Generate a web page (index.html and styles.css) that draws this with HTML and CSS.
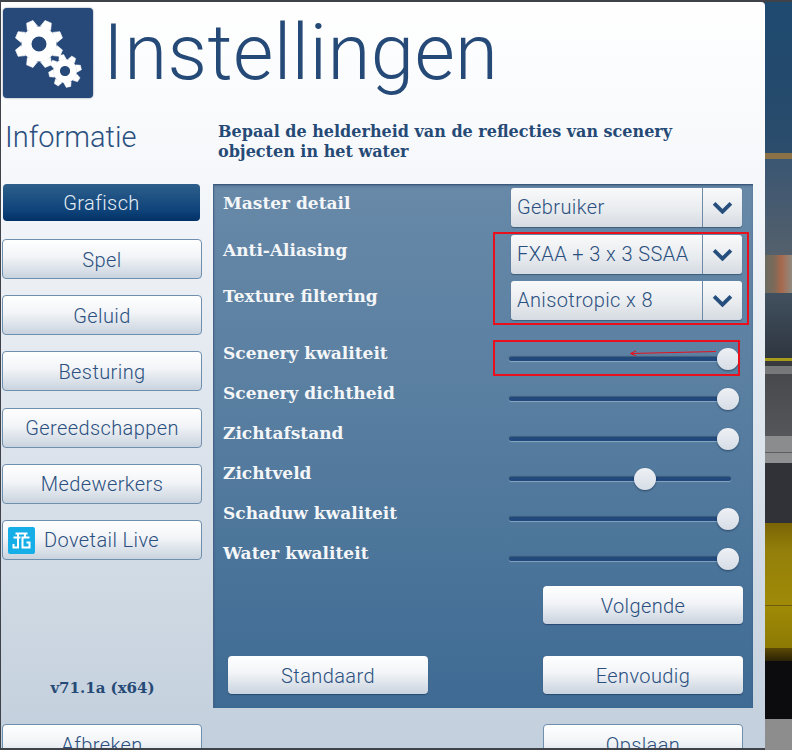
FILE: index.html
```html
<!DOCTYPE html>
<html lang="nl">
<head>
<meta charset="utf-8">
<title>Instellingen</title>
<link rel="stylesheet" href="styles.css">
</head>
<body>
<div class="stage">
  <div class="panel">
    <header class="head">
      <svg class="logo" viewBox="0 0 90 90" aria-hidden="true">
        <defs>
          <g id="gear">
            <g id="teeth">
              <polygon id="t" points="-5.5,-17 -3.4,-24 3.4,-24 5.5,-17" transform="rotate(22.5)"/>
              <polygon points="-5.5,-17 -3.4,-24 3.4,-24 5.5,-17" transform="rotate(67.5)"/>
              <polygon points="-5.5,-17 -3.4,-24 3.4,-24 5.5,-17" transform="rotate(112.5)"/>
              <polygon points="-5.5,-17 -3.4,-24 3.4,-24 5.5,-17" transform="rotate(157.5)"/>
              <polygon points="-5.5,-17 -3.4,-24 3.4,-24 5.5,-17" transform="rotate(202.5)"/>
              <polygon points="-5.5,-17 -3.4,-24 3.4,-24 5.5,-17" transform="rotate(247.5)"/>
              <polygon points="-5.5,-17 -3.4,-24 3.4,-24 5.5,-17" transform="rotate(292.5)"/>
              <polygon points="-5.5,-17 -3.4,-24 3.4,-24 5.5,-17" transform="rotate(337.5)"/>
            </g>
            <circle r="12.5" fill="none" stroke="#fff" stroke-width="10"/>
          </g>
        </defs>
        <use href="#gear" class="gear" transform="translate(36 36)"/>
        <use href="#gear" class="gear" transform="translate(62 63) scale(.68) rotate(10)"/>
      </svg>
      <h1 class="title">Instellingen</h1>
    </header>

    <div class="columns">
      <nav class="side">
        <h2 class="info">Informatie</h2>
        <button class="btn active">Grafisch</button>
        <button class="btn">Spel</button>
        <button class="btn">Geluid</button>
        <button class="btn">Besturing</button>
        <button class="btn">Gereedschappen</button>
        <button class="btn">Medewerkers</button>
        <button class="btn live">
          <svg class="dt" viewBox="0 0 27 27" aria-hidden="true">
            <rect width="27" height="27" rx="2" class="dt-bg"/>
            <path class="dt-mark" d="M7.5 6.5h12M10 6.5v3M17 6.5v3M5.5 10.5h7M10 10.5v10H5.5v-3.5M21.5 10.5h-7v10h7v-5h-3"/>
          </svg>
          Dovetail Live
        </button>
        <p class="version">v71.1a (x64)</p>
        <button class="btn foot">Afbreken</button>
      </nav>

      <main class="main">
        <p class="desc">Bepaal de helderheid van de reflecties van scenery<br>objecten in het water</p>
        <section class="box">
          <div class="row sel-row"><span class="label">Master detail</span><div class="select"><span class="val">Gebruiker</span><span class="chev"><svg viewBox="0 0 20 12"><path d="M2 2l8 8 8-8"/></svg></span></div></div>
          <div class="row sel-row"><span class="label">Anti-Aliasing</span><div class="select"><span class="val">FXAA + 3 x 3 SSAA</span><span class="chev"><svg viewBox="0 0 20 12"><path d="M2 2l8 8 8-8"/></svg></span></div></div>
          <div class="row sel-row"><span class="label">Texture filtering</span><div class="select"><span class="val">Anisotropic x 8</span><span class="chev"><svg viewBox="0 0 20 12"><path d="M2 2l8 8 8-8"/></svg></span></div></div>
          <div class="sliders">
            <div class="row sl-row"><span class="label">Scenery kwaliteit</span><div class="slider"><span class="thumb"></span></div></div>
            <div class="row sl-row"><span class="label">Scenery dichtheid</span><div class="slider"><span class="thumb"></span></div></div>
            <div class="row sl-row"><span class="label">Zichtafstand</span><div class="slider"><span class="thumb"></span></div></div>
            <div class="row sl-row"><span class="label">Zichtveld</span><div class="slider mid"><span class="thumb"></span></div></div>
            <div class="row sl-row"><span class="label">Schaduw kwaliteit</span><div class="slider"><span class="thumb"></span></div></div>
            <div class="row sl-row"><span class="label">Water kwaliteit</span><div class="slider"><span class="thumb"></span></div></div>
          </div>
          <div class="next"><button class="btn wide">Volgende</button></div>
          <div class="actions"><button class="btn wide">Standaard</button><button class="btn wide">Eenvoudig</button></div>
        </section>
        <div class="save"><button class="btn wide foot">Opslaan</button></div>
      </main>
    </div>

    <div class="mark mark-a"></div>
    <div class="mark mark-b"></div>
    <svg class="arrow" viewBox="0 0 90 6" aria-hidden="true"><path d="M87 1.5L2 3.5M7 .8L1.5 3.5 7 6"/></svg>
  </div>

  <div class="scene" aria-hidden="true">
    <i class="b sky"></i><i class="b crane"></i><i class="b haze"></i><i class="b town"></i><i class="b hull"></i><i class="b yline"></i><i class="b gap"></i><i class="b lgrey"></i><i class="b road"></i><i class="b slab"></i><i class="b slab2"></i><i class="b dark"></i><i class="b yellow"></i><i class="b yline2"></i><i class="b yellow2"></i><i class="b gold"></i><i class="b black"></i><i class="b end"></i>
  </div>
</div>
</body>
</html>
```

FILE: styles.css
```css
* { box-sizing: border-box; }
html, body { margin: 0; padding: 0; background: #3a3f47; }
.stage {
  width: 792px;
  height: 750px;
  overflow: hidden;
  display: flex;
  padding: 2px 0 2px 1px;
  background: #3f4249;
}
.panel {
  position: relative;
  width: 764px;
  height: 746px;
  flex: none;
  overflow: hidden;
  background: linear-gradient(180deg, #ffffff 0%, #f6f8fb 22%, #d8e0e9 65%, #c2cfdc 100%);
  border-top-right-radius: 4px;
  color: #264a76;
  font-family: Roboto, sans-serif;
}
.head { display: flex; align-items: flex-start; height: 112px; padding: 6px 0 0 2px; }
.logo {
  width: 90px;
  height: 90px;
  flex: none;
  background: #26497a;
  border-radius: 4px;
  box-shadow: 0 0 2px rgba(30, 50, 80, .6);
}
.gear { fill: #fff; stroke: #fff; stroke-width: .6px; stroke-linejoin: round; }
.title {
  margin: 2px 0 0 10px;
  font-family: Roboto, sans-serif;
  font-weight: 300;
  font-size: 78px;
  line-height: 86px;
  letter-spacing: .4px;
  color: #254a78;
}
.columns { display: flex; }
.side { width: 212px; flex: none; padding-left: 1px; display: flex; flex-direction: column; }
.info {
  margin: 6px 0 30px 3px;
  height: 34px;
  font-family: Roboto, sans-serif;
  font-weight: 300;
  font-size: 29px;
  line-height: 34px;
  color: #2b5080;
}
.btn {
  display: flex;
  align-items: center;
  justify-content: center;
  width: 200px;
  height: 40px;
  margin: 0 0 16.2px;
  padding: 1px 0 0;
  border: 1px solid #6f8fae;
  border-radius: 4px;
  background: linear-gradient(180deg, #ffffff 0%, #f2f4f7 45%, #c9d3de 100%);
  color: #2b5080;
  font-family: Roboto, sans-serif;
  font-weight: 300;
  font-size: 20px;
  letter-spacing: .4px;
}
.active {
  width: 197px;
  height: 37px;
  margin: 0 0 18px 1px;
  padding: 0;
  border: 0;
  background: linear-gradient(180deg, #2e5f8c 0%, #0f447a 70%, #003166 100%);
  color: #e6edf3;
}
.live { justify-content: flex-start; padding-left: 5px; gap: 9px; }
.dt { width: 27px; height: 27px; }
.dt-bg { fill: #16aee6; }
.dt-mark { fill: none; stroke: #fff; stroke-width: 2; }
.version {
  margin: 92px 0 0;
  padding-right: 10px;
  height: 56px;
  text-align: center;
  font-family: "DejaVu Serif", serif;
  font-weight: 700;
  font-size: 15px;
  line-height: 40px;
  color: #264a76;
}
.foot { margin: 0; }
.main { width: 541px; flex: none; }
.desc {
  margin: 8px 0 22px 5px;
  height: 40px;
  font-family: "DejaVu Serif", serif;
  font-weight: 700;
  font-size: 16px;
  line-height: 20px;
  color: #264a76;
}
.box {
  width: 540px;
  height: 524px;
  padding: 3px 10px 0;
  background: linear-gradient(180deg, #6889a8 0%, #557c9f 50%, #3e6a93 100%);
  border-top: 1px solid #3a587c;
  border-left: 1px solid #46648a;
  box-shadow: inset 0 1px 2px rgba(30, 50, 80, .35);
}
.row { display: flex; justify-content: space-between; }
.label {
  margin-left: -1px;
  font-family: "DejaVu Serif", serif;
  font-weight: 700;
  font-size: 17px;
  line-height: 24px;
  color: #f4f6f8;
  white-space: nowrap;
}
.sel-row { height: 39px; margin-bottom: 7.5px; width: 518px; }
.sel-row .label { margin-top: 3px; }
.select {
  display: flex;
  width: 231px;
  height: 39px;
  border-radius: 3px;
  overflow: hidden;
  background: linear-gradient(180deg, #f8f9fa 0%, #e9ecef 55%, #d5dbe2 100%);
  box-shadow: 0 1px 1px rgba(30, 50, 80, .5);
  color: #2b5080;
  font-family: Roboto, sans-serif;
  font-weight: 300;
  font-size: 20px;
  letter-spacing: .4px;
}
.val { flex: 1; padding-left: 6px; line-height: 38px; white-space: nowrap; }
.chev {
  width: 40px;
  display: flex;
  align-items: center;
  justify-content: center;
  border-left: 1px solid #6f8aa6;
}
.chev svg { width: 21px; height: 13px; fill: none; stroke: #264f7e; stroke-width: 3.6; }
.sliders { margin-top: 21px; }
.sl-row { height: 40px; width: 529px; align-items: flex-start; }
.slider {
  position: relative;
  width: 222px;
  height: 4px;
  margin: 16px 22px 0 0;
  border-radius: 2px;
  background: #22497c;
  box-shadow: 0 -1px 1px rgba(30, 50, 80, .45), 0 1px 1px rgba(190, 210, 225, .5);
}
.thumb {
  position: absolute;
  top: -9px;
  right: -8px;
  width: 22px;
  height: 22px;
  border-radius: 50%;
  background: linear-gradient(180deg, #eef1f5, #d6dde5);
  box-shadow: 0 1px 2px rgba(20, 40, 70, .6);
}
.mid .thumb { right: 75px; }
.next { display: flex; justify-content: flex-end; margin-top: 5px; }
.actions { display: flex; justify-content: space-between; margin: 32px 0 0 4px; }
.box .btn { margin: 0; }
.wide { height: 38px; border: 0; box-shadow: 0 1px 1px rgba(20, 50, 90, .6); }
.save { display: flex; justify-content: flex-end; padding-right: 11px; margin-top: 16px; }
.save .wide { height: 40px; border: 1px solid #6f8fae; box-shadow: none; }
.mark { position: absolute; border: 2px solid #e8101c; }
.mark-a { left: 492px; top: 230px; width: 256px; height: 93px; }
.mark-b { left: 492px; top: 338px; width: 247px; height: 36px; }
.arrow {
  position: absolute;
  left: 628px;
  top: 348px;
  width: 90px;
  height: 6px;
  fill: none;
  stroke: #e8101c;
  stroke-width: 1;
}
.scene { flex: 1; display: flex; flex-direction: column; border-left: 0; }
.b { display: block; flex: none; }
.sky { height: 151px; background: linear-gradient(180deg, #1f4a70, #244a6c 60%, #2d4d6c); }
.crane { height: 6px; background: #8a7146; }
.haze { height: 96px; background: linear-gradient(180deg, #3a5672, #54606c); }
.town { height: 38px; background: linear-gradient(90deg, #6a6a60 0%, #7d6a58 35%, #a8684c 60%, #8f8a80 100%); }
.hull { height: 65px; background: linear-gradient(180deg, #41505f, #2f3640); }
.yline { height: 3px; background: #a79c1a; }
.gap { height: 5px; background: #383a3e; }
.lgrey { height: 8px; background: #77787a; }
.road { height: 62px; background: linear-gradient(180deg, #48494c, #55565a); }
.slab { height: 16px; background: #8b8c8e; }
.slab2 { height: 11px; background: #8f9092; border-top: 1px solid #5d5e60; }
.dark { height: 60px; background: #303238; }
.yellow { height: 82px; background: linear-gradient(180deg, #7a6406, #94800a 35%, #a08a08); }
.yline2 { height: 1px; background: #6b5c0e; }
.yellow2 { height: 42px; background: linear-gradient(180deg, #a08a06, #8c7a04); }
.gold { height: 13px; background: linear-gradient(180deg, #5c4a04, #2a2204); }
.black { height: 58px; background: #0c0c0e; }
.end { height: 40px; background: #8d8d8d; }
```
